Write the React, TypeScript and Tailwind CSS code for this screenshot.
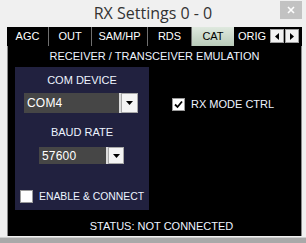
import React from "react";

const F = { fontFamily: "'Liberation Sans', Arial, sans-serif" };

function Check({ checked }: { checked?: boolean }) {
  return (
    <div className="w-[13px] h-[13px] bg-white border border-[#9a9a9a] flex items-center justify-center shrink-0">
      {checked && (
        <svg width="9" height="9" viewBox="0 0 9 9">
          <path d="M1 4.5 L3.5 7 L8 1.5" stroke="#000" strokeWidth="1.8" fill="none" />
        </svg>
      )}
    </div>
  );
}

function Combo({ w, h, text, btn }: { w: number; h: number; text: string; btn: number }) {
  return (
    <div className="flex bg-[#464646]" style={{ width: w, height: h }}>
      <div className="flex-1 flex items-center pl-[3px] text-white text-[12px] tracking-[0.2px] border-r-2 border-[#dcdcdc]">{text}</div>
      <div className="bg-[#f4f4f4] border border-[#a8a8a8] flex items-center justify-center" style={{ width: btn }}>
        <svg width="7" height="4" viewBox="0 0 7 4">
          <path d="M0 0 H7 L3.5 4 Z" fill="#000" />
        </svg>
      </div>
    </div>
  );
}

export default function App() {
  const tabs = [
    { t: "AGC", w: 42 },
    { t: "OUT", w: 43 },
    { t: "SAM/HP", w: 56 },
    { t: "RDS", w: 44 },
    { t: "CAT", w: 42, active: true },
  ];
  const txt = "text-[11px] text-[#eef4ff] whitespace-nowrap";
  return (
    <div className="w-[306px] h-[243px] bg-[#f0f0f0] relative overflow-hidden" style={F}>
      <div className="h-[27px] flex items-center justify-center text-[16px] text-[#333]" style={{ fontFamily: "'Open Sans', 'Noto Sans', sans-serif" }}>
        <span className="-mt-[1px]">RX Settings 0 - 0</span>
      </div>
      <div className="absolute left-[280px] top-[1px] w-[22px] h-[18px] bg-[#c2c2c2] flex items-center justify-center">
        <svg width="8" height="8" viewBox="0 0 8 8">
          <path d="M1 1 L7 7 M7 1 L1 7" stroke="#fff" strokeWidth="1.6" />
        </svg>
      </div>
      <div className="ml-[7px] w-[295px] h-[209px] bg-black flex flex-col">
        <div className="h-[19px] flex text-[11px] text-white">
          {tabs.map((tab) => (
            <div
              key={tab.t}
              className={
                "h-full flex items-center justify-center " +
                (tab.active
                  ? "bg-gradient-to-b from-[#dfe9df] to-[#b9cbb9] text-black"
                  : "border-r border-[#707070]")
              }
              style={{ width: tab.w }}
            >
              {tab.t}
            </div>
          ))}
          <div className="w-[36px] h-full flex items-center pl-[4px] overflow-hidden">ORIG</div>
          <div className="flex h-[14px] mt-[2px] gap-[1px]">
            <div className="w-[14px] h-full bg-[#f2f2f2] border border-[#a0a0a0] flex items-center justify-center">
              <svg width="4" height="7" viewBox="0 0 4 7"><path d="M4 0 V7 L0 3.5 Z" fill="#000" /></svg>
            </div>
            <div className="w-[14px] h-full bg-[#f2f2f2] border border-[#a0a0a0] flex items-center justify-center">
              <svg width="4" height="7" viewBox="0 0 4 7"><path d="M0 0 V7 L4 3.5 Z" fill="#000" /></svg>
            </div>
          </div>
        </div>
        <div className="flex-1 border-l border-r border-[#8a8a8a] flex flex-col">
          <div className={"h-[20px] flex items-center justify-center " + txt}>
            RECEIVER / TRANSCEIVER EMULATION
          </div>
          <div className="flex">
            <div className="ml-[7px] w-[134px] h-[143px] mt-[1px] bg-[#21213f] flex flex-col items-center">
              <div className={"mt-[6px] h-[14px] flex items-center " + txt}>COM DEVICE</div>
              <div className="mt-[6px] self-start ml-[9px]">
                <Combo w={114} h={20} text="COM4" btn={17} />
              </div>
              <div className={"mt-[12px] h-[14px] flex items-center " + txt}>BAUD RATE</div>
              <div className="mt-[8px] self-start ml-[24px]">
                <Combo w={85} h={17} text="57600" btn={16} />
              </div>
              <div className={"mt-[25px] self-start ml-[5px] flex items-center gap-[6px] " + txt}>
                <Check />
                <span className="text-[10.4px]">ENABLE &amp; CONNECT</span>
              </div>
            </div>
            <div className={"ml-[23px] mt-[32px] flex items-center gap-[6px] h-[13px] " + txt}>
              <Check checked />
              <span>RX MODE CTRL</span>
            </div>
          </div>
          <div className={"mt-[10px] h-[12px] flex items-center justify-center pl-[14px] " + txt}>
            STATUS: NOT CONNECTED
          </div>
        </div>
      </div>
      <div className="absolute left-0 right-0 bottom-0 h-[6px] bg-[#a9a9a9] border-t border-[#d0d0d0]" />
    </div>
  );
}
